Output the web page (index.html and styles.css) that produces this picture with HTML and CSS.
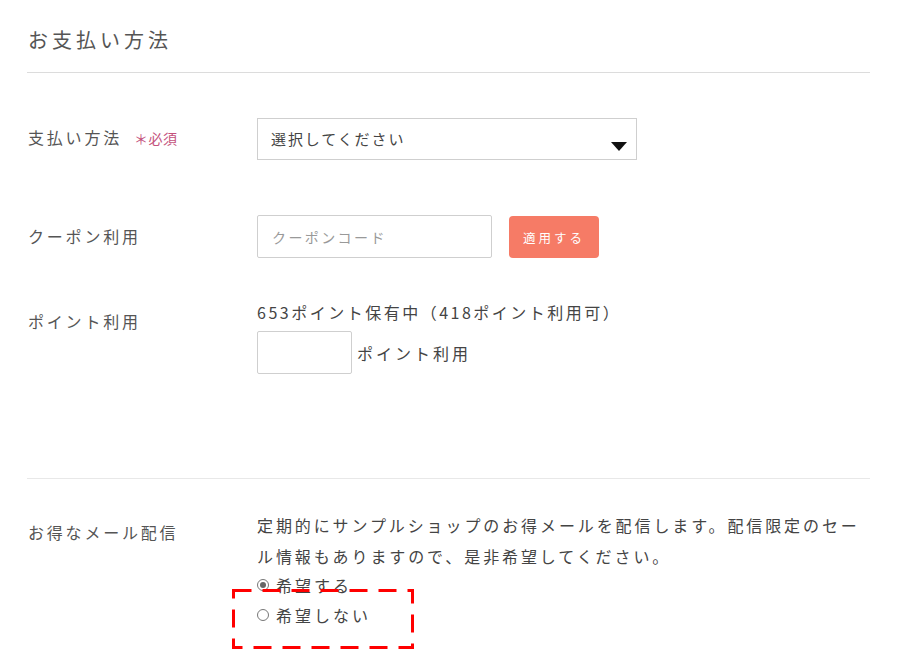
FILE: index.html
```html
<!DOCTYPE html>
<html lang="ja">
<head>
<meta charset="utf-8">
<title>お支払い方法</title>
<link rel="stylesheet" href="styles.css">
</head>
<body>
<div class="page">
  <h2 class="section-title">お支払い方法</h2>

  <div class="row row-pay">
    <div class="label">支払い方法<span class="req">＊必須</span></div>
    <div class="field">
      <div class="select">
        <span>選択してください</span>
        <span class="caret"></span>
      </div>
    </div>
  </div>

  <div class="row row-coupon">
    <div class="label">クーポン利用</div>
    <div class="field coupon">
      <div class="input coupon-input">クーポンコード</div>
      <div class="btn">適用する</div>
    </div>
  </div>

  <div class="row row-point">
    <div class="label">ポイント利用</div>
    <div class="field">
      <div class="point-info">653ポイント保有中（418ポイント利用可）</div>
      <div class="point-use">
        <div class="input point-input"></div>
        <span>ポイント利用</span>
      </div>
    </div>
  </div>

  <div class="divider"></div>

  <div class="row row-mail">
    <div class="label">お得なメール配信</div>
    <div class="field">
      <p class="desc">定期的にサンプルショップのお得メールを配信します。配信限定のセール情報もありますので、是非希望してください。</p>
      <div class="radios">
        <div class="radio"><span class="dot checked"></span>希望する</div>
        <div class="radio"><span class="dot"></span>希望しない</div>
        <svg class="highlight" width="182" height="60" viewBox="0 0 182 60">
          <rect x="1.5" y="1.5" width="179" height="57" fill="none" stroke="#ff0000" stroke-width="3" stroke-dasharray="18 11"/>
        </svg>
      </div>
    </div>
  </div>
</div>
</body>
</html>
```

FILE: styles.css
```css
* { box-sizing: border-box; }
html, body { min-height: 100%; }
body {
  margin: 0;
  background: #fff;
  font-family: "Noto Sans CJK JP", "Noto Sans", sans-serif;
  color: #555;
}
.page {
  padding: 0 30px 60px 27px;
}
.section-title {
  margin: 0;
  padding: 24px 0 16px 1px;
  font-size: 20px;
  line-height: 32px;
  font-weight: 400;
  letter-spacing: 4px;
  color: #555;
  border-bottom: 1px solid #dcdcdc;
}
.row {
  display: grid;
  grid-template-columns: 230px 1fr;
  align-items: start;
}
.label {
  padding-left: 1px;
  font-size: 16px;
  line-height: 22px;
  letter-spacing: 2.8px;
  color: #555;
}
.req {
  margin-left: 12px;
  font-size: 14px;
  letter-spacing: 0.5px;
  color: #c4527d;
}
.row-pay { margin-top: 45px; }
.row-pay .label { padding-top: 8px; }
.select {
  width: 380px;
  height: 42px;
  border: 1px solid #cfcfcf;
  display: flex;
  align-items: center;
  justify-content: space-between;
  padding: 0 9px 0 13px;
  font-size: 15px;
  letter-spacing: 1.9px;
  color: #444;
}
.select span:first-child { margin-top: -2px; }
.caret {
  width: 0;
  height: 0;
  margin-top: 14px;
  border-left: 8px solid transparent;
  border-right: 8px solid transparent;
  border-top: 9px solid #111;
}
.row-coupon { margin-top: 55px; }
.row-coupon .label { padding-top: 10px; }
.coupon {
  display: flex;
  align-items: center;
  gap: 17px;
}
.input {
  border: 1px solid #cfcfcf;
  border-radius: 2px;
  background: #fff;
}
.coupon-input {
  width: 235px;
  height: 43px;
  padding: 0 14px;
  display: flex;
  align-items: center;
  font-size: 14px;
  letter-spacing: 2.4px;
  color: #999;
}
.btn {
  width: 90px;
  height: 42px;
  border-radius: 4px;
  background: #f67b66;
  color: #fff;
  font-size: 12.5px;
  letter-spacing: 3px;
  display: flex;
  align-items: center;
  justify-content: center;
  margin-top: 1px;
}
.row-point { margin-top: 43px; }
.row-point .label { padding-top: 9px; }
.point-info {
  font-size: 16px;
  line-height: 22px;
  letter-spacing: 2.5px;
  color: #444;
}
.point-use {
  display: flex;
  align-items: center;
  gap: 5px;
  margin-top: 8px;
  font-size: 16px;
  letter-spacing: 3px;
  color: #444;
}
.point-input {
  width: 95px;
  height: 43px;
}
.divider {
  margin-top: 104px;
  border-top: 1px solid #e8e8e8;
}
.row-mail { margin-top: 31px; }
.row-mail .label { padding-top: 11px; }
.desc {
  margin: 0;
  max-width: 604px;
  font-size: 16px;
  line-height: 31px;
  letter-spacing: 2.9px;
  color: #444;
}
.radios {
  position: relative;
  margin-top: -2px;
}
.radio {
  display: flex;
  align-items: center;
  height: 30px;
  font-size: 16px;
  letter-spacing: 3px;
  color: #444;
}
.dot {
  width: 12px;
  height: 12px;
  border: 1px solid #777;
  border-radius: 50%;
  margin-right: 7px;
  position: relative;
  background: #fff;
}
.dot.checked::after {
  content: "";
  position: absolute;
  left: 2px;
  top: 2px;
  width: 6px;
  height: 6px;
  border-radius: 50%;
  background: #666;
}
.highlight {
  position: absolute;
  left: -25px;
  top: 19px;
}
```
